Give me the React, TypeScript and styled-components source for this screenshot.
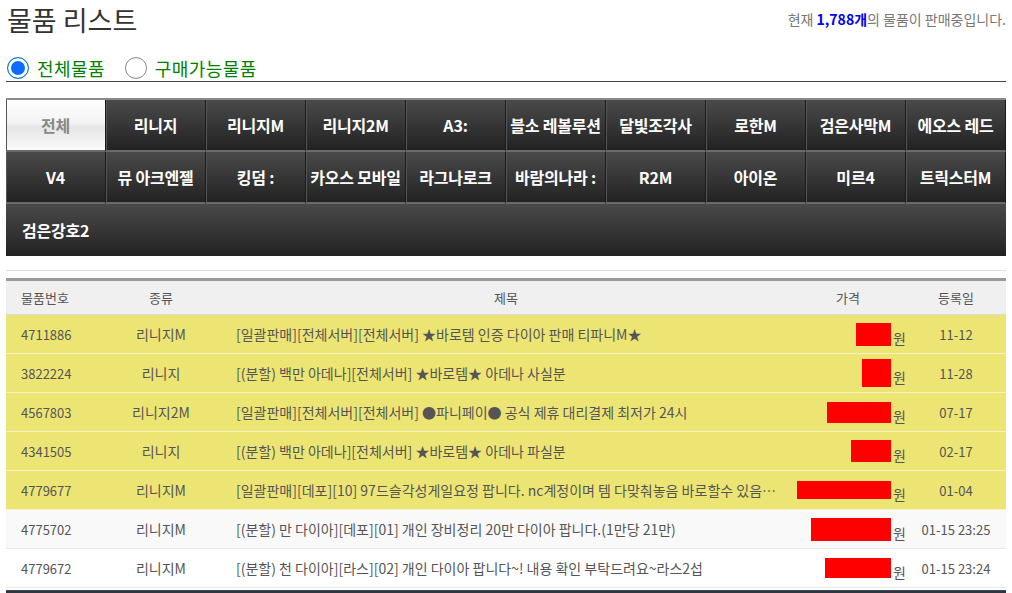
import React from 'react';
import styled, { createGlobalStyle } from 'styled-components';

const GlobalStyle = createGlobalStyle`
  html, body {
    margin: 0;
    padding: 0;
    background: #fff;
  }
  body {
    font-family: "Noto Sans CJK KR", "Noto Sans", "Liberation Sans", sans-serif;
    color: #555;
  }
  * { box-sizing: border-box; }
`;

const Page = styled.div`
  width: 1012px;
  padding: 0 6px;
`;

const TitleBar = styled.div`
  height: 44px;
  display: flex;
  justify-content: space-between;
  align-items: flex-start;
`;

const Title = styled.h2`
  margin: 3px 0 0 1px;
  font-size: 27px;
  font-weight: 400;
  color: #333;
  line-height: 34px;
`;

const Summary = styled.div`
  margin-top: 9px;
  font-size: 14px;
  color: #777;
  line-height: 20px;
`;

const Count = styled.span`
  color: #0000ee;
  font-weight: 700;
`;

const FilterBar = styled.div`
  height: 38px;
  display: flex;
  align-items: center;
  gap: 19px;
  padding-top: 11px;
  border-bottom: 1px solid #444;
`;

const FilterOption = styled.label`
  display: flex;
  align-items: center;
  gap: 8px;
  font-size: 18px;
  letter-spacing: 0.4px;
  color: #008000;
  cursor: pointer;
`;

const RadioMark = styled.span<{ $checked: boolean }>`
  width: 22px;
  height: 22px;
  margin-left: 1px;
  border-radius: 50%;
  border: 1px solid ${({ $checked }) => ($checked ? '#1a73e8' : '#888')};
  background: ${({ $checked }) => ($checked ? '#0a6cff' : '#fff')};
  box-shadow: ${({ $checked }) => ($checked ? 'inset 0 0 0 3px #fff' : 'none')};
`;

const Menu = styled.div`
  margin-top: 16px;
  border-top: 2px solid #8a8a8a;
  display: grid;
  grid-template-columns: repeat(10, 1fr);
`;

const MenuItem = styled.div<{ $active?: boolean; $wide?: boolean }>`
  height: 52px;
  display: flex;
  align-items: center;
  justify-content: ${({ $wide }) => ($wide ? 'flex-start' : 'center')};
  grid-column: ${({ $wide }) => ($wide ? '1 / -1' : 'auto')};
  padding: ${({ $wide }) => ($wide ? '0 16px' : '0')};
  border-bottom: 2px solid #6a6a6a;
  border-right: ${({ $wide }) => ($wide ? 'none' : '1px solid #1a1a1a')};
  box-shadow: ${({ $wide }) => ($wide ? 'none' : 'inset 1px 0 0 #555')};
  background: ${({ $active }) =>
    $active
      ? 'linear-gradient(to bottom, #ffffff 0%, #f3f3f3 45%, #e6e6e6 55%, #fafafa 100%)'
      : 'linear-gradient(to bottom, #4a4a4a 0%, #363636 50%, #222 100%)'};
  color: ${({ $active }) => ($active ? '#888' : '#fff')};
  font-size: 16px;
  font-weight: 700;
  white-space: nowrap;
  overflow: hidden;
  letter-spacing: -0.2px;
  &:last-child {
    border-bottom: none;
  }
`;

const Divider = styled.div`
  margin-top: 14px;
  border-top: 1px solid #ddd;
`;

const Table = styled.div`
  margin-top: 7px;
  border-top: 3px solid #999;
`;

const Row = styled.div<{ $tone: 'head' | 'premium' | 'alt' | 'plain' }>`
  display: grid;
  grid-template-columns: 94px 122px 1fr 116px 100px;
  align-items: center;
  height: ${({ $tone }) => ($tone === 'head' ? '34px' : '39px')};
  font-size: 13px;
  color: #555;
  background: ${({ $tone }) =>
    $tone === 'head' ? '#f0f0f0' : $tone === 'premium' ? '#ece574' : $tone === 'alt' ? '#f9f9f9' : '#fff'};
  border-bottom: 1px solid
    ${({ $tone }) => ($tone === 'premium' ? '#f6f2c8' : $tone === 'head' ? '#dcdcdc' : '#e8e8e8')};
`;

const Cell = styled.div<{ $align?: 'left' | 'center' | 'right' }>`
  text-align: ${({ $align }) => $align || 'center'};
  white-space: nowrap;
  overflow: hidden;
  text-overflow: ellipsis;
`;

const IdCell = styled(Cell)`
  padding-left: 15px;
`;

const KindCell = styled(Cell)`
  font-size: 14px;
`;

const SubjectCell = styled(Cell)`
  padding: 0 10px 0 14px;
  font-size: 14px;
`;

const PriceCell = styled.div`
  display: flex;
  justify-content: flex-end;
  align-items: center;
  gap: 2px;
`;

const PriceMask = styled.span`
  display: block;
  background: #ff0000;
`;

const Won = styled.span`
  margin-top: 7px;
  font-size: 14px;
`;

const BottomBar = styled.div`
  margin-top: 2px;
  height: 4px;
  background: #2f3640;
  border-top: 1px solid #3b4a5a;
`;

const games = [
  '리니지', '리니지M', '리니지2M', 'A3:', '블소 레볼루션', '달빛조각사', '로한M', '검은사막M', '에오스 레드',
  'V4', '뮤 아크엔젤', '킹덤 :', '카오스 모바일', '라그나로크', '바람의나라 :', 'R2M', '아이온', '미르4', '트릭스터M',
];

type Item = {
  id: string;
  kind: string;
  subject: string;
  mask: [number, number];
  date: string;
  tone: 'premium' | 'alt' | 'plain';
};

const items: Item[] = [
  { id: '4711886', kind: '리니지M', subject: '[일괄판매][전체서버][전체서버] ★바로템 인증 다이아 판매 티파니M★', mask: [35, 23], date: '11-12', tone: 'premium' },
  { id: '3822224', kind: '리니지', subject: '[(분할) 백만 아데나][전체서버] ★바로템★ 아데나 사실분', mask: [29, 28], date: '11-28', tone: 'premium' },
  { id: '4567803', kind: '리니지2M', subject: '[일괄판매][전체서버][전체서버] ●파니페이● 공식 제휴 대리결제 최저가 24시', mask: [64, 21], date: '07-17', tone: 'premium' },
  { id: '4341505', kind: '리니지', subject: '[(분할) 백만 아데나][전체서버] ★바로템★ 아데나 파실분', mask: [40, 22], date: '02-17', tone: 'premium' },
  { id: '4779677', kind: '리니지M', subject: '[일괄판매][데포][10] 97드슬각성게일요정 팝니다. nc계정이며 템 다맞춰놓음 바로할수 있음~...', mask: [94, 18], date: '01-04', tone: 'premium' },
  { id: '4775702', kind: '리니지M', subject: '[(분할) 만 다이아][데포][01] 개인 장비정리 20만 다이아 팝니다.(1만당 21만)', mask: [80, 23], date: '01-15 23:25', tone: 'alt' },
  { id: '4779672', kind: '리니지M', subject: '[(분할) 천 다이아][라스][02] 개인 다이아 팝니다~! 내용 확인 부탁드려요~라스2섭', mask: [66, 20], date: '01-15 23:24', tone: 'plain' },
];

export default function App() {
  return (
    <Page>
      <GlobalStyle />
      <TitleBar>
        <Title>물품 리스트</Title>
        <Summary>
          현재 <Count>1,788개</Count>의 물품이 판매중입니다.
        </Summary>
      </TitleBar>
      <FilterBar>
        <FilterOption>
          <RadioMark $checked />
          전체물품
        </FilterOption>
        <FilterOption>
          <RadioMark $checked={false} />
          구매가능물품
        </FilterOption>
      </FilterBar>

      <Menu>
        <MenuItem $active>전체</MenuItem>
        {games.map((g) => (
          <MenuItem key={g}>{g}</MenuItem>
        ))}
        <MenuItem $wide>검은강호2</MenuItem>
      </Menu>

      <Divider />

      <Table>
        <Row $tone="head">
          <IdCell $align="left">물품번호</IdCell>
          <Cell>종류</Cell>
          <Cell>제목</Cell>
          <Cell>가격</Cell>
          <Cell>등록일</Cell>
        </Row>
        {items.map((it) => (
          <Row key={it.id} $tone={it.tone}>
            <IdCell $align="left">{it.id}</IdCell>
            <KindCell>{it.kind}</KindCell>
            <SubjectCell $align="left">{it.subject}</SubjectCell>
            <PriceCell>
              <PriceMask style={{ width: it.mask[0], height: it.mask[1] }} />
              <Won>원</Won>
            </PriceCell>
            <Cell>{it.date}</Cell>
          </Row>
        ))}
      </Table>
      <BottomBar />
    </Page>
  );
}
